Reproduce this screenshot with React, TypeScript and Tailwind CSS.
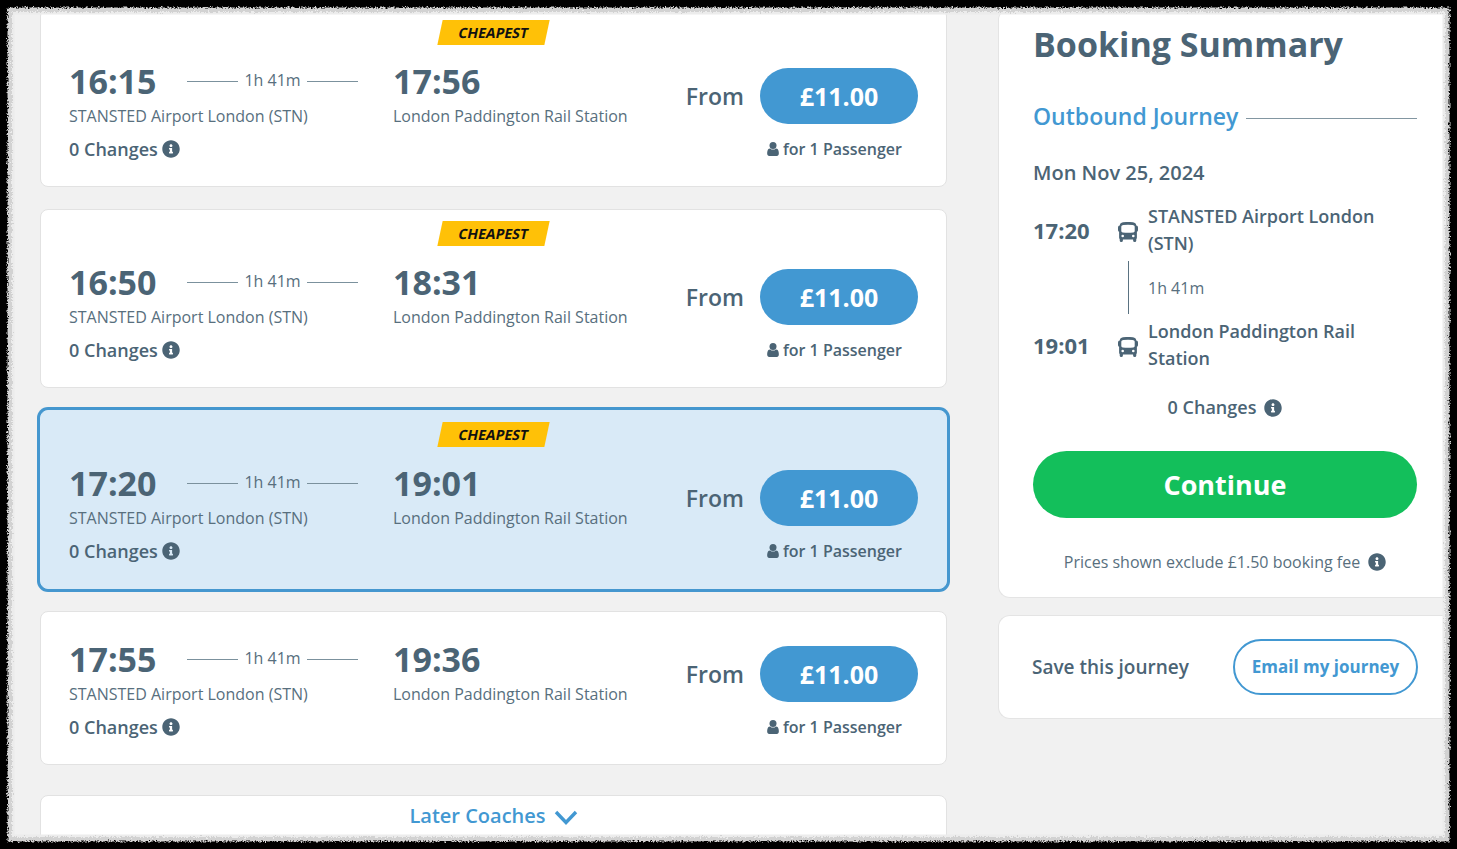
import React from "react";
import { FaInfoCircle } from "react-icons/fa";

type Journey = {
  depart: string;
  arrive: string;
  cheapest: boolean;
  selected?: boolean;
};

const ORIGIN = "STANSTED Airport London (STN)";
const DESTINATION = "London Paddington Rail Station";
const DURATION = "1h 41m";

const journeys: Journey[] = [
  { depart: "16:15", arrive: "17:56", cheapest: true },
  { depart: "16:50", arrive: "18:31", cheapest: true },
  { depart: "17:20", arrive: "19:01", cheapest: true, selected: true },
  { depart: "17:55", arrive: "19:36", cheapest: false },
];

function UserIcon() {
  return (
    <svg viewBox="0 128 1280 1536" className="h-[14px] w-3" fill="currentColor" aria-hidden="true">
      <path d="M1280 1399q0 109-62.5 187t-150.5 78h-854q-88 0-150.5-78t-62.5-187q0-85 8.5-160.5t31.5-152 58.5-131 94-89 134.5-34.5q131 128 313 128t313-128q76 0 134.5 34.5t94 89 58.5 131 31.5 152 8.5 160.5z" />
      <circle cx="640" cy="512" r="384" />
    </svg>
  );
}

function BusIcon() {
  return (
    <svg viewBox="0 0 20 20" className="h-5 w-5" fill="currentColor" aria-hidden="true">
      <path
        fillRule="evenodd"
        d="M5 .3Q10-.4 15 .3Q18 .8 18.3 3.6Q20 3.8 20 5.5V8Q20 9.5 18.9 9.8V15.5Q18.9 16.6 18.3 17V18.5Q18.3 20 16.7 20T15.1 18.5V17.4H4.9V18.5Q4.9 20 3.3 20T1.7 18.5V17Q1.1 16.6 1.1 15.5V9.8Q0 9.5 0 8V5.5Q0 3.8 1.7 3.6Q2 .8 5 .3ZM5.4 2.9Q3.4 3 3.3 4.5V8.9Q3.3 10.3 4.7 10.5Q10 11.1 15.3 10.5Q16.7 10.3 16.7 8.9V4.5Q16.6 3 14.6 2.9Q10 2.4 5.4 2.9ZM4.7 12.7A1.3 1.3 0 1 0 4.7 15.3A1.3 1.3 0 1 0 4.7 12.7ZM15.3 12.7A1.3 1.3 0 1 0 15.3 15.3A1.3 1.3 0 1 0 15.3 12.7Z"
      />
    </svg>
  );
}

function InfoButton() {
  return (
    <button type="button" aria-label="More information" className="shrink-0">
      <FaInfoCircle className="h-[18px] w-[18px]" />
    </button>
  );
}

function JourneyCard({ journey }: { journey: Journey }) {
  return (
    <article
      className={
        journey.selected
          ? "rounded-lg border border-[#d9eaf7] bg-[#d9eaf7] px-7 pb-[21px] ring-3 ring-[#4597cf]"
          : "rounded-lg border border-[#e2e2e2] bg-white px-7 pb-[21px]"
      }
    >
      {journey.cheapest ? (
        <div className="flex justify-center pt-[11px] pb-[21px]">
          <span className="flex h-[25px] w-[107px] -skew-x-12 items-center justify-center bg-[#ffc107] text-sm font-bold text-[#111]">
            CHEAPEST
          </span>
        </div>
      ) : (
        <div className="h-8" />
      )}
      <div className="flex justify-between">
        <div className="grid grid-cols-[118px_206px_auto] auto-rows-[33px] items-center">
          <strong className="pb-1 text-[34px] leading-7 font-bold">{journey.depart}</strong>
          <div className="mr-[35px] flex items-center pb-1.5">
            <span className="mt-1 h-px flex-1 bg-[#7b919d]" />
            <span className="px-[6px] leading-6 text-[#586f7e]">{DURATION}</span>
            <span className="mt-1 h-px flex-1 bg-[#7b919d]" />
          </div>
          <strong className="pb-1 text-[34px] leading-7 font-bold">{journey.arrive}</strong>
          <span className="col-span-2 text-[#586f7e]">{ORIGIN}</span>
          <span className="text-[#586f7e]">{DESTINATION}</span>
          <span className="col-span-3 flex items-center gap-1 text-lg font-semibold">
            0 Changes <InfoButton />
          </span>
        </div>
        <div className="flex flex-col justify-between pt-0.5">
          <div className="flex items-center gap-4">
            <span className="text-[23px] font-semibold">From</span>
            <button type="button" className="h-14 w-[158px] rounded-full bg-[#4298d2] pt-0.5 text-[25px] font-bold text-white">
              £11.00
            </button>
          </div>
          <div className="flex h-[33px] items-center justify-end gap-1 pr-4 font-semibold">
            <UserIcon />
            for 1 Passenger
          </div>
        </div>
      </div>
    </article>
  );
}

function Stop({ time, place }: { time: string; place: string }) {
  return (
    <div className="flex items-center pr-8">
      <strong className="w-[85px] text-[22px] leading-8 font-bold">{time}</strong>
      <span className="w-[30px] pt-1">
        <BusIcon />
      </span>
      <span className="flex-1 text-lg leading-[27px] font-semibold">{place}</span>
    </div>
  );
}

function Summary() {
  return (
    <aside className="flex w-[459px] shrink-0 flex-col gap-[17px]">
      <section className="rounded-l-xl border border-r-0 border-[#e4e4e4] bg-white pt-[11px] pr-10 pb-[23px] pl-[34px]">
        <h1 className="text-[34px] leading-[48px] font-bold">Booking Summary</h1>
        <h2 className="mt-8 flex items-center gap-2 text-[23px] leading-8 font-semibold text-[#4298d2]">
          Outbound Journey
          <span className="mt-1 h-px flex-1 bg-[#8296a1]" />
        </h2>
        <p className="mt-[27px] mb-4 text-xl leading-7 font-semibold">Mon Nov 25, 2024</p>
        <Stop time="17:20" place={ORIGIN} />
        <div className="my-1 ml-[95px] flex h-[53px] items-center border-l border-[#5a7281] pl-[19px] text-[#586f7e]">
          {DURATION}
        </div>
        <Stop time="19:01" place={DESTINATION} />
        <p className="mt-[22px] flex items-center justify-center gap-2 text-lg leading-[27px] font-semibold">
          0 Changes <InfoButton />
        </p>
        <button
          type="button"
          className="mt-[30px] h-[67px] w-full rounded-full bg-[#13bf5b] pt-0.5 text-[27px] font-bold text-white"
        >
          Continue
        </button>
        <p className="mt-8 flex items-center justify-center gap-2 leading-6 text-[#586f7e]">
          Prices shown exclude £1.50 booking fee{" "}
          <span className="flex text-[#4b6475]">
            <InfoButton />
          </span>
        </p>
      </section>
      <section className="flex h-[104px] items-center justify-between rounded-l-xl border border-r-0 border-[#e4e4e4] bg-white pr-[39px] pl-[33px]">
        <span className="text-[19px] font-semibold">Save this journey</span>
        <button
          type="button"
          className="h-14 w-[185px] rounded-full border-2 border-[#4298d2] text-[17px] font-bold text-[#4298d2]"
        >
          Email my journey
        </button>
      </section>
    </aside>
  );
}

function RoughFrame() {
  return (
    <svg className="pointer-events-none absolute inset-0 h-full w-full" aria-hidden="true">
      <defs>
        <filter id="rough" x="0" y="0" width="100%" height="100%">
          <feTurbulence type="fractalNoise" baseFrequency="0.6" numOctaves="2" seed="4" result="noise" />
          <feDisplacementMap in="SourceGraphic" in2="noise" scale="6" xChannelSelector="R" yChannelSelector="G" />
        </filter>
      </defs>
      <rect className="h-[calc(100%-22px)] w-[calc(100%-22px)]" x="11" y="11" rx="4" fill="none" stroke="#ececec" strokeWidth="7" />
      <g filter="url(#rough)">
        <rect className="h-[calc(100%-18px)] w-[calc(100%-18px)]" x="9" y="9" rx="4" fill="none" stroke="#d2d2d2" strokeWidth="6" />
        <rect className="h-full w-full" fill="none" stroke="#000" strokeWidth="15" />
      </g>
      <rect className="h-full w-full" fill="none" stroke="#000" strokeWidth="12" />
    </svg>
  );
}

export default function App() {
  return (
    <div className="relative h-screen overflow-hidden bg-[#f1f1f1] font-['Open_Sans',sans-serif] text-base text-[#4b6475]">
      <div className="flex gap-[51px] pt-2 pl-10">
        <main className="flex min-w-0 flex-1 flex-col gap-[22px]">
          {journeys.map((journey) => (
            <JourneyCard key={journey.depart} journey={journey} />
          ))}
          <button
            type="button"
            className="mt-2 flex h-14 items-start justify-center gap-2 rounded-lg border border-[#e2e2e2] bg-white pt-1.5 text-xl leading-7 font-semibold text-[#4298d2]"
          >
            Later Coaches
            <svg viewBox="0 0 24 16" className="mt-2 h-4 w-6" fill="none" stroke="currentColor" strokeWidth="3.4" aria-hidden="true">
              <path d="M2 2L12 12.5L22 2" />
            </svg>
          </button>
        </main>
        <Summary />
      </div>
      <RoughFrame />
    </div>
  );
}
